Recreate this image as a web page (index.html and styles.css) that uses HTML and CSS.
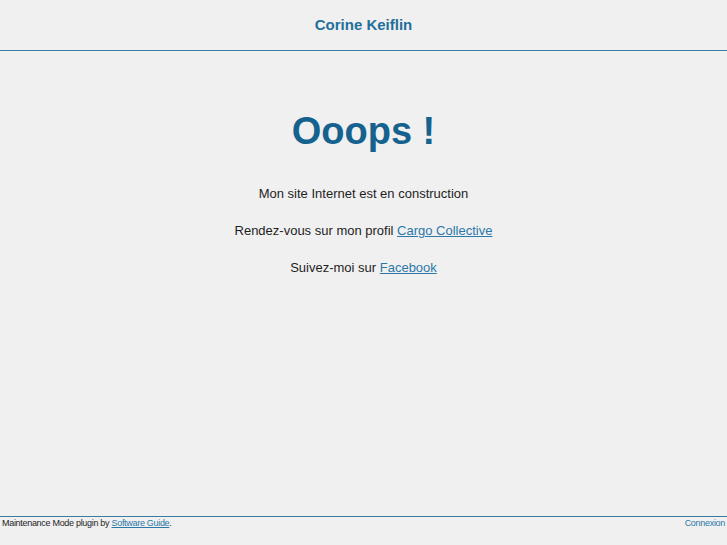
FILE: index.html
```html
<!DOCTYPE html>
<html lang="fr">
<head>
<meta charset="utf-8">
<title>Corine Keiflin</title>
<link rel="stylesheet" href="styles.css">
</head>
<body>
<div class="page">
  <header class="header">
    <div class="site-title">Corine Keiflin</div>
  </header>
  <main class="content">
    <h1 class="title">Ooops !</h1>
    <p>Mon site Internet est en construction</p>
    <p>Rendez-vous sur mon profil <a href="#">Cargo Collective</a></p>
    <p>Suivez-moi sur <a href="#">Facebook</a></p>
  </main>
  <footer class="footer">
    <div class="credit">Maintenance Mode plugin by <a href="#">Software Guide</a>.</div>
    <a class="login" href="#">Connexion</a>
  </footer>
</div>
</body>
</html>
```

FILE: styles.css
```css
html, body {
  margin: 0;
  padding: 0;
  height: 100%;
}
body {
  background: #f0f0f0;
  font-family: "Liberation Sans", Arial, sans-serif;
  color: #1e1e1e;
}
.page {
  display: flex;
  flex-direction: column;
  min-height: 100%;
}
.header {
  height: 51px;
  box-sizing: border-box;
  padding-bottom: 1px;
  border-bottom: 1px solid #3a7ba3;
  display: flex;
  align-items: center;
  justify-content: center;
}
.site-title {
  font-size: 15px;
  font-weight: bold;
  color: #1f6f9b;
}
.content {
  flex: 1;
  text-align: center;
  font-size: 13px;
}
.title {
  margin: 58px 0 33px;
  font-size: 38px;
  line-height: 44px;
  font-weight: bold;
  color: #15628f;
}
.content p {
  margin: 0 0 22px;
  line-height: 15px;
}
.content a {
  color: #2c78a8;
}
.footer {
  height: 28px;
  border-top: 1px solid #3a7ba3;
  display: flex;
  justify-content: space-between;
  align-items: flex-start;
  font-size: 9px;
  padding: 0 0 0 2px;
  letter-spacing: -0.3px;
}
.credit {
  line-height: 12px;
}
.credit a {
  color: #2c78a8;
}
.login {
  color: #2c78a8;
  text-decoration: none;
  line-height: 12px;
  padding-right: 2px;
}
```
